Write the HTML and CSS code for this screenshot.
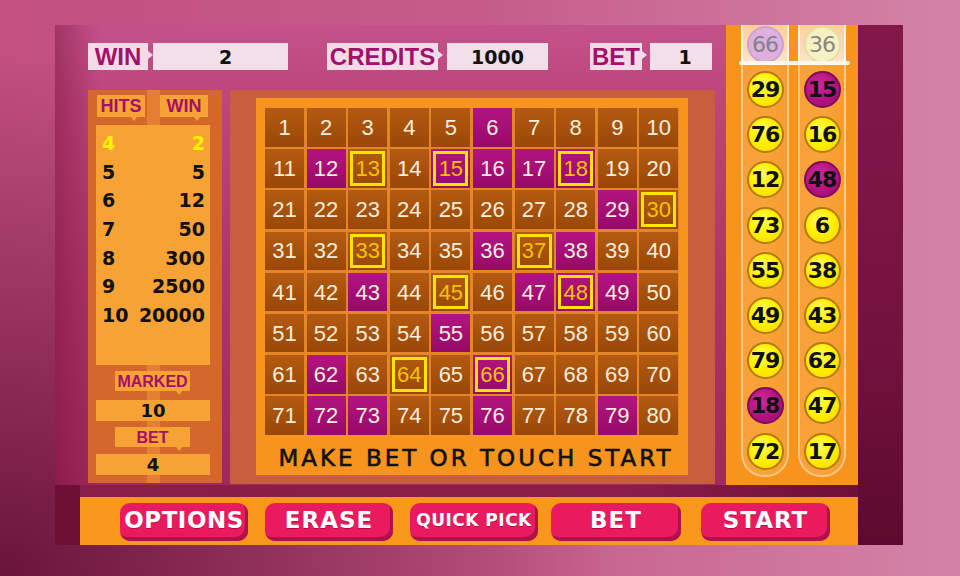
FILE: index.html
```html
<!DOCTYPE html>
<html>
<head>
<meta charset="utf-8">
<title>Keno</title>
<link rel="stylesheet" href="styles.css">
</head>
<body>
<div class="page">
  <div class="frame">
    <div class="left">
      <div class="topbar">
        <div class="lbl lbl-win">WIN</div>
        <div class="val val-win">2</div>
        <div class="lbl lbl-credits">CREDITS</div>
        <div class="val val-credits">1000</div>
        <div class="lbl lbl-bet">BET</div>
        <div class="val val-bet">1</div>
      </div>
      <div class="content">
        <div class="paytable">
          <div class="pt-head">
            <div class="pt-lbl">HITS</div>
            <div class="pt-lbl pt-lbl-win">WIN</div>
          </div>
          <div class="pt-table">
            <div class="pt-row hl"><span>4</span><span>2</span></div>
            <div class="pt-row"><span>5</span><span>5</span></div>
            <div class="pt-row"><span>6</span><span>12</span></div>
            <div class="pt-row"><span>7</span><span>50</span></div>
            <div class="pt-row"><span>8</span><span>300</span></div>
            <div class="pt-row"><span>9</span><span>2500</span></div>
            <div class="pt-row"><span>10</span><span>20000</span></div>
          </div>
          <div class="sub-lbl sub-marked">MARKED</div>
          <div class="sub-val sub-val-marked">10</div>
          <div class="sub-lbl sub-bet">BET</div>
          <div class="sub-val sub-val-bet">4</div>
        </div>
        <div class="board">
          <div class="board-inner">
            <div class="grid">
              <div class="c">1</div><div class="c">2</div><div class="c">3</div><div class="c">4</div><div class="c">5</div><div class="c m">6</div><div class="c">7</div><div class="c">8</div><div class="c">9</div><div class="c">10</div>
              <div class="c">11</div><div class="c m">12</div><div class="c o">13</div><div class="c">14</div><div class="c m o">15</div><div class="c m">16</div><div class="c m">17</div><div class="c m o">18</div><div class="c">19</div><div class="c">20</div>
              <div class="c">21</div><div class="c">22</div><div class="c">23</div><div class="c">24</div><div class="c">25</div><div class="c">26</div><div class="c">27</div><div class="c">28</div><div class="c m">29</div><div class="c o">30</div>
              <div class="c">31</div><div class="c">32</div><div class="c o">33</div><div class="c">34</div><div class="c">35</div><div class="c m">36</div><div class="c o">37</div><div class="c m">38</div><div class="c">39</div><div class="c">40</div>
              <div class="c">41</div><div class="c">42</div><div class="c m">43</div><div class="c">44</div><div class="c o">45</div><div class="c">46</div><div class="c m">47</div><div class="c m o">48</div><div class="c m">49</div><div class="c">50</div>
              <div class="c">51</div><div class="c">52</div><div class="c">53</div><div class="c">54</div><div class="c m">55</div><div class="c">56</div><div class="c">57</div><div class="c">58</div><div class="c">59</div><div class="c">60</div>
              <div class="c">61</div><div class="c m">62</div><div class="c">63</div><div class="c o">64</div><div class="c">65</div><div class="c m o">66</div><div class="c">67</div><div class="c">68</div><div class="c">69</div><div class="c">70</div>
              <div class="c">71</div><div class="c m">72</div><div class="c m">73</div><div class="c">74</div><div class="c">75</div><div class="c m">76</div><div class="c">77</div><div class="c">78</div><div class="c m">79</div><div class="c">80</div>
            </div>
            <div class="msg">MAKE BET OR TOUCH START</div>
          </div>
        </div>
      </div>
    </div>

    <div class="tubes">
      <div class="caps">
        <div class="cap"><div class="ball faded-p">66</div></div>
        <div class="cap"><div class="ball faded-y">36</div></div>
      </div>
      <div class="shelf"></div>
      <div class="bodies">
        <div class="tube">
          <div class="ball">29</div>
          <div class="ball">76</div>
          <div class="ball">12</div>
          <div class="ball">73</div>
          <div class="ball">55</div>
          <div class="ball">49</div>
          <div class="ball">79</div>
          <div class="ball hit">18</div>
          <div class="ball">72</div>
        </div>
        <div class="tube">
          <div class="ball hit">15</div>
          <div class="ball">16</div>
          <div class="ball hit">48</div>
          <div class="ball">6</div>
          <div class="ball">38</div>
          <div class="ball">43</div>
          <div class="ball">62</div>
          <div class="ball">47</div>
          <div class="ball">17</div>
        </div>
      </div>
    </div>

    <div class="strip"></div>
    <div class="corner"></div>
    <div class="gap"></div>

    <div class="buttons">
      <div class="btn btn-options">OPTIONS</div>
      <div class="btn btn-erase">ERASE</div>
      <div class="btn btn-quick">QUICK PICK</div>
      <div class="btn btn-bet">BET</div>
      <div class="btn btn-start">START</div>
    </div>
  </div>
</div>
</body>
</html>
```

FILE: styles.css
```css
html, body {
  margin: 0;
  padding: 0;
}
body {
  width: 960px;
  height: 576px;
  overflow: hidden;
  font-family: "Liberation Sans", Arial, sans-serif;
  background:
    radial-gradient(ellipse 620px 520px at 0% 100%, rgba(90, 10, 45, 0.85) 0%, rgba(90, 10, 45, 0) 100%),
    linear-gradient(to right, #c24f80 0%, #c55c88 50%, #d384a6 100%);
}
.page {
  padding: 25px 57px 31px 55px;
}
.frame {
  width: 848px;
  height: 520px;
  display: grid;
  grid-template-columns: 25px 646px 132px 45px;
  grid-template-rows: 460px 12px 48px;
  background:
    linear-gradient(to right, rgba(110, 10, 50, 0.4) 0px, rgba(110, 10, 50, 0) 45px),
    linear-gradient(to bottom, #c4528a 0%, #bd467b 14%, #ad3468 50%, #9b2657 100%);
}

/* ---------- left area ---------- */
.left {
  grid-column: 1 / 3;
  grid-row: 1;
  display: flex;
  flex-direction: column;
  padding-left: 33px;
}
.topbar {
  height: 65px;
  box-sizing: border-box;
  padding-top: 18px;
  display: flex;
  align-items: flex-start;
}
.lbl {
  position: relative;
  height: 27px;
  line-height: 28px;
  background: #f3dbe8;
  color: #a3106b;
  font-family: "Liberation Sans", Arial, sans-serif;
  font-weight: bold;
  font-size: 24px;
  text-align: center;
}
.lbl::after {
  content: "";
  position: absolute;
  right: -5px;
  top: 8px;
  border-left: 5px solid #f3dbe8;
  border-top: 4px solid transparent;
  border-bottom: 4px solid transparent;
}
.val {
  height: 27px;
  line-height: 28px;
  background: #f2dfea;
  color: #111;
  font-family: "DejaVu Sans", sans-serif;
  font-weight: bold;
  font-size: 19px;
  text-align: center;
}
.lbl-win { width: 60px; }
.val-win { width: 135px; margin-left: 5px; padding-left: 10px; box-sizing: border-box; }
.lbl-credits { width: 111px; margin-left: 39px; }
.val-credits { width: 101px; margin-left: 9px; }
.lbl-bet { width: 52px; margin-left: 42px; }
.val-bet { width: 62px; margin-left: 8px; padding-left: 8px; box-sizing: border-box; }

.content {
  display: flex;
  height: 395px;
}

/* ---------- pay table ---------- */
.paytable {
  width: 134px;
  height: 393px;
  box-sizing: border-box;
  padding: 5px 12px 0 8px;
  background:
    linear-gradient(to right, rgba(0,0,0,0) 59px, rgba(245, 150, 60, 0.5) 59px, rgba(245, 150, 60, 0.5) 72px, rgba(0,0,0,0) 72px),
    #d4672b;
  display: flex;
  flex-direction: column;
}
.pt-head {
  display: flex;
  height: 22px;
  margin-left: 1px;
}
.pt-lbl {
  position: relative;
  width: 48px;
  height: 22px;
  line-height: 23px;
  background: #f7a234;
  color: #a3106b;
  font-weight: bold;
  font-size: 18px;
  text-align: center;
}
.pt-lbl::after {
  content: "";
  position: absolute;
  right: 8px;
  bottom: -4px;
  border-top: 4px solid #f7a234;
  border-left: 3px solid transparent;
  border-right: 3px solid transparent;
}
.pt-lbl-win { margin-left: 15px; }
.pt-table {
  margin-top: 8px;
  height: 240px;
  width: 114px;
  box-sizing: border-box;
  background: #f7a234;
  padding: 4px 5px 0 6px;
}
.pt-row {
  display: flex;
  justify-content: space-between;
  height: 28.7px;
  line-height: 28.7px;
  font-family: "DejaVu Sans", sans-serif;
  font-weight: bold;
  font-size: 19px;
  color: #111;
}
.pt-row.hl { color: #fff200; }

.sub-lbl {
  position: relative;
  margin-top: 6px;
  margin-left: 19px;
  width: 75px;
  height: 20px;
  line-height: 21px;
  background: #f7a234;
  color: #a3106b;
  font-weight: bold;
  font-size: 16px;
  text-align: center;
}
.sub-lbl::after {
  content: "";
  position: absolute;
  right: 8px;
  bottom: -4px;
  border-top: 4px solid #f7a234;
  border-left: 3px solid transparent;
  border-right: 3px solid transparent;
}
.sub-val {
  width: 114px;
  height: 21px;
  line-height: 22px;
  background: #f7a234;
  color: #111;
  font-family: "DejaVu Sans", sans-serif;
  font-weight: bold;
  font-size: 18px;
  text-align: center;
}
.sub-val-marked { margin-top: 9px; }
.sub-bet { margin-top: 6px; }
.sub-val-bet { margin-top: 7px; }

/* ---------- board ---------- */
.board {
  width: 485px;
  height: 394px;
  margin-left: 8px;
  box-sizing: border-box;
  padding: 8px 27px 9px 26px;
  background: #c75f3e;
}
.board-inner {
  height: 377px;
  box-sizing: border-box;
  padding: 10px 9px 0 9px;
  background: #f7941e;
}
.grid {
  display: grid;
  grid-template-columns: repeat(10, 39px);
  grid-auto-rows: 38.5px;
  column-gap: 2.6px;
  row-gap: 2.7px;
  background: #e4852a;
}
.c {
  display: flex;
  align-items: center;
  justify-content: center;
  background: linear-gradient(to bottom, #b45b12 0%, #a8520c 45%, #9a4708 100%);
  color: #fbeedb;
  font-family: "Liberation Sans", Arial, sans-serif;
  font-size: 22px;
  padding-top: 1px;
  box-sizing: border-box;
}
.c.m {
  background: linear-gradient(to bottom, #b3147f 0%, #a80f77 45%, #950a68 100%);
}
.c.o {
  outline: 3px solid #ffe400;
  outline-offset: -5px;
  color: #f3c300;
}
.msg {
  padding-top: 6px;
  padding-left: 8px;
  height: 34px;
  line-height: 34px;
  text-align: center;
  white-space: nowrap;
  font-family: "DejaVu Sans", sans-serif;
  font-size: 23px;
  letter-spacing: 3px;
  color: #111;
  -webkit-text-stroke: 0.6px #111;
}

/* ---------- tubes ---------- */
.tubes {
  grid-column: 3;
  grid-row: 1;
  background: #f7941e;
  display: flex;
  flex-direction: column;
}
.caps {
  display: flex;
  gap: 9px;
  padding: 0 12px 0 15px;
  height: 36px;
}
.cap {
  width: 48px;
  height: 36px;
  box-sizing: border-box;
  padding-top: 1px;
  background: linear-gradient(to bottom, rgba(255,255,255,0.55), rgba(255,255,255,0.75));
  border-left: 2px solid rgba(255,255,255,0.7);
  border-right: 2px solid rgba(255,255,255,0.7);
  display: flex;
  justify-content: center;
  overflow: hidden;
}
.shelf {
  height: 4px;
  margin: 0 8px 0 13px;
  background: #fff7ea;
  border-radius: 2px;
}
.bodies {
  display: flex;
  gap: 9px;
  padding: 0 12px 0 15px;
}
.tube {
  width: 48px;
  height: 412px;
  box-sizing: border-box;
  padding-top: 6px;
  border-left: 2px solid rgba(255, 236, 200, 0.55);
  border-right: 2px solid rgba(255, 236, 200, 0.55);
  border-bottom: 2px solid rgba(255, 236, 200, 0.55);
  border-radius: 0 0 23px 23px;
  background: linear-gradient(to right, rgba(255,255,255,0.12), rgba(255,220,160,0.22) 50%, rgba(255,255,255,0.08));
  display: flex;
  flex-direction: column;
  align-items: center;
  gap: 8.2px;
}
.ball {
  width: 37px;
  height: 37px;
  flex: none;
  box-sizing: border-box;
  border-radius: 50%;
  border: 2px solid #b8780f;
  background: radial-gradient(circle at 40% 35%, #fffa60 0%, #fff000 45%, #f5d800 100%);
  color: #111;
  font-family: "DejaVu Sans", sans-serif;
  font-weight: bold;
  font-size: 22px;
  letter-spacing: -1px;
  line-height: 34px;
  text-align: center;
}
.ball.hit {
  border-color: #7e0c5a;
  background: radial-gradient(circle at 40% 35%, #cc2a98 0%, #b3127f 55%, #9a0c6c 100%);
}
.ball.faded-p {
  border-color: rgba(200, 150, 200, 0.6);
  background: #ddb0df;
  color: #858088;
  font-weight: normal;
}
.ball.faded-y {
  border-color: rgba(220, 210, 150, 0.6);
  background: #f6f1c2;
  color: #8a8780;
  font-weight: normal;
}

/* ---------- dark fillers ---------- */
.strip {
  grid-column: 4;
  grid-row: 1 / 4;
  background: linear-gradient(to bottom, #82184a 0%, #74123f 60%, #5c0a2d 100%);
}
.corner {
  grid-column: 1;
  grid-row: 2 / 4;
  background: #6c1035;
}
.gap {
  grid-column: 2 / 4;
  grid-row: 2;
  background: linear-gradient(to right, #8a1e48, #8c1d4a 70%, #6e0f38);
}

/* ---------- buttons ---------- */
.buttons {
  grid-column: 2 / 4;
  grid-row: 3;
  background: #f7981d;
  display: flex;
  align-items: flex-start;
  gap: 17px;
  padding: 6px 0 0 40px;
}
.btn {
  width: 128px;
  height: 38px;
  box-sizing: border-box;
  padding-bottom: 4px;
  border-radius: 10px;
  background: #ea1a5f;
  box-shadow: inset -3px -4px 0 #b01149;
  color: #fff;
  font-family: "DejaVu Sans", sans-serif;
  font-weight: bold;
  font-size: 23px;
  letter-spacing: 1px;
  line-height: 35px;
  text-align: center;
  text-shadow: 0 1px 0 rgba(120, 0, 40, 0.5);
}
.btn-options {
  letter-spacing: 0.5px;
}
.btn-quick {
  font-size: 17px;
  letter-spacing: 0.5px;
}
.btn-bet {
  width: 130px;
  margin-left: -4px;
}
.btn-start {
  width: 129px;
  margin-left: 3px;
}
```
